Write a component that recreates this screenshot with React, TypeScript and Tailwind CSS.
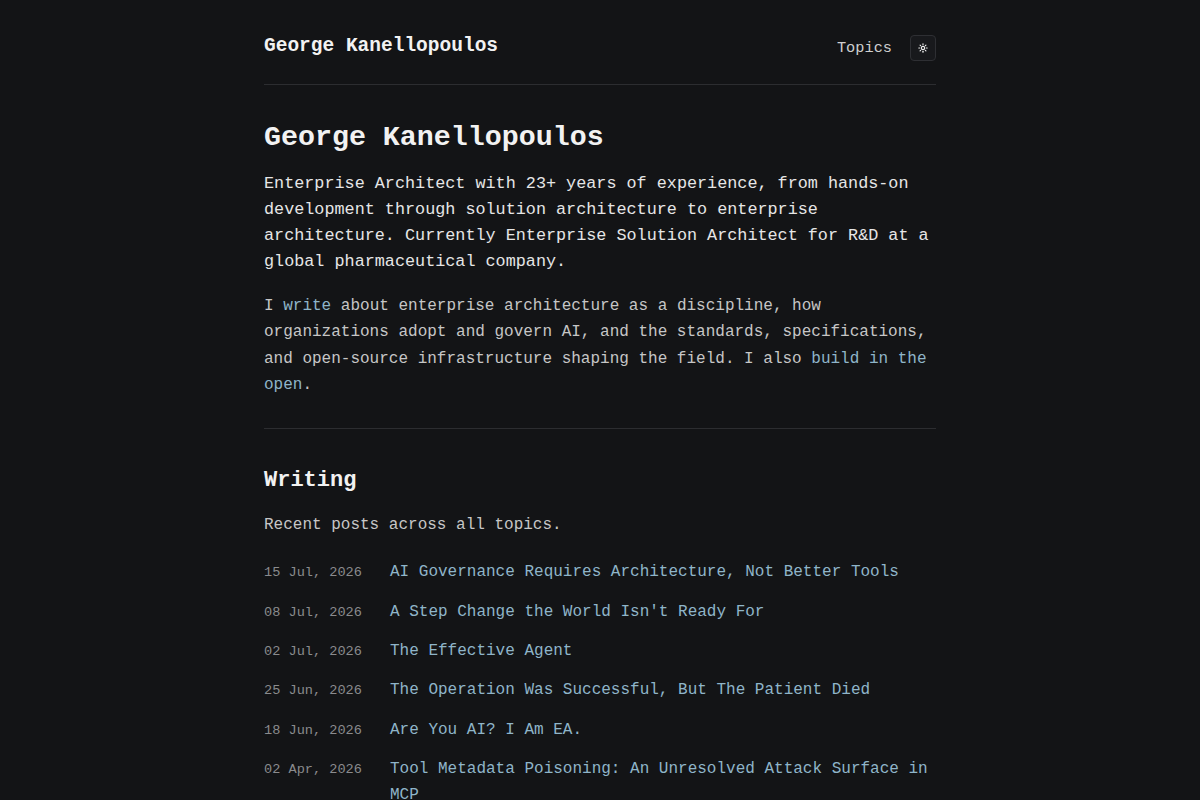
import { Sun } from "lucide-react"

type Post = {
  date: string
  title: string
}

const posts: Post[] = [
  { date: "15 Jul, 2026", title: "AI Governance Requires Architecture, Not Better Tools" },
  { date: "08 Jul, 2026", title: "A Step Change the World Isn't Ready For" },
  { date: "02 Jul, 2026", title: "The Effective Agent" },
  { date: "25 Jun, 2026", title: "The Operation Was Successful, But The Patient Died" },
  { date: "18 Jun, 2026", title: "Are You AI? I Am EA." },
  { date: "02 Apr, 2026", title: "Tool Metadata Poisoning: An Unresolved Attack Surface in MCP" },
]

const mono = "font-['Liberation_Mono','DejaVu_Sans_Mono',monospace]"

export default function App() {
  return (
    <div className={`min-h-screen bg-[#131416] text-[#e6e6e6] ${mono}`}>
      <div className="mx-auto w-[672px]">
        {/* Site header */}
        <header className="flex items-center justify-between border-b border-[#2c2d30] pt-[32px] pb-[23px]">
          <a className="text-[19.5px] leading-[29px] font-bold text-[#f2f2f2]">George Kanellopoulos</a>
          <nav className="flex items-center gap-[18px] pt-[3px]">
            <a className="text-[15.3px] text-[#cfcfcf]">Topics</a>
            <button className="flex h-[26px] w-[26px] items-center justify-center rounded-[4px] border border-[#2e2f33] bg-[#18191c] text-[#eeeeee]">
              <Sun size={10} strokeWidth={2.75} />
            </button>
          </nav>
        </header>

        {/* Intro */}
        <section className="border-b border-[#2c2d30] pt-[35px] pb-[30px]">
          <h1 className="text-[28.3px] leading-[34px] font-bold text-[#f2f2f2]">George Kanellopoulos</h1>
          <p className="mt-[17px] text-[16.8px] leading-[26px] text-[#e6e6e6]">
            Enterprise Architect with 23+ years of experience, from hands-on development through solution
            architecture to enterprise architecture. Currently Enterprise Solution Architect for R&amp;D at a global
            pharmaceutical company.
          </p>
          <p className="mt-[18px] text-[16px] leading-[26.3px] text-[#c6c6c6]">
            I <a className="text-[#8fb5c9]">write</a> about enterprise architecture as a discipline, how organizations
            adopt and govern AI, and the standards, specifications, and open-source infrastructure shaping the field. I
            also <a className="text-[#8fb5c9]">build in the open</a>.
          </p>
        </section>

        {/* Writing */}
        <section className="pt-[38px]">
          <h2 className="text-[22px] leading-[28px] font-bold text-[#f2f2f2]">Writing</h2>
          <p className="mt-[17px] text-[16px] leading-[26px] text-[#c6c6c6]">Recent posts across all topics.</p>
          <ul className="mt-[22px] flex flex-col gap-[13.8px]">
            {posts.map(p => (
              <li key={p.title} className="flex items-baseline">
                <span className="w-[126px] shrink-0 text-[13.6px] text-[#8a8b8d]">{p.date}</span>
                <a className="text-[16px] leading-[25.6px] text-[#8fb5c9]">{p.title}</a>
              </li>
            ))}
          </ul>
        </section>
      </div>
    </div>
  )
}
